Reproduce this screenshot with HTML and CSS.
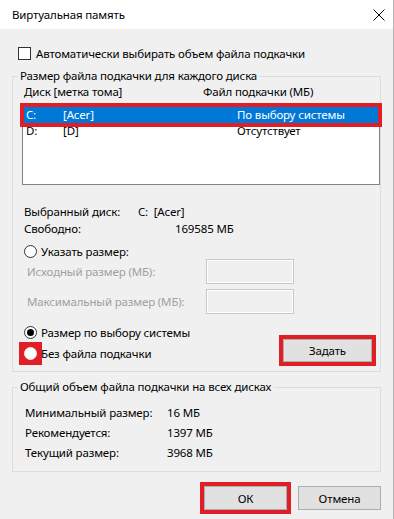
FILE: index.html
```html
<!DOCTYPE html>
<html lang="ru">
<head>
  <meta charset="UTF-8">
  <meta name="viewport" content="width=device-width, initial-scale=1.0">
  <title>Виртуальная память</title>
  <link rel="stylesheet" href="styles.css">
</head>
<body>

<div class="window">
  <div class="titlebar">
    <span class="title">Виртуальная память</span>
    <svg class="close" width="12" height="12" viewBox="0 0 12 12">
      <path d="M0.5 0.5L11.5 11.5M11.5 0.5L0.5 11.5" stroke="#000" stroke-width="1" fill="none"/>
    </svg>
  </div>

  <div class="content">
    <div class="check-row">
      <span class="checkbox"></span>
      <span>Автоматически выбирать объем файла подкачки</span>
    </div>

    <fieldset class="group">
      <legend>Размер файла подкачки для каждого диска</legend>
      <div class="group-body drives">
        <div class="list-head">
          <span class="col-disk">Диск [метка тома]</span>
          <span>Файл подкачки (МБ)</span>
        </div>
        <div class="drive-list">
          <div class="drive-row selected">
            <span class="c-letter">C:</span><span class="c-label">[Acer]</span><span>По выбору системы</span>
          </div>
          <div class="drive-row">
            <span class="c-letter">D:</span><span class="c-label">[D]</span><span>Отсутствует</span>
          </div>
        </div>

        <div class="disk-info">
          <div class="info-row"><span class="info-label">Выбранный диск:</span><span>C:&nbsp; [Acer]</span></div>
          <div class="info-row"><span class="info-label free">Свободно:</span><span>169585 МБ</span></div>
        </div>

        <div class="radio-row custom">
          <span class="radio"></span>
          <span>Указать размер:</span>
        </div>
        <div class="size-row">
          <span class="size-label">Исходный размер (МБ):</span>
          <span class="size-input"></span>
        </div>
        <div class="size-row">
          <span class="size-label">Максимальный размер (МБ):</span>
          <span class="size-input"></span>
        </div>

        <div class="choice">
          <div class="choice-radios">
            <div class="radio-row">
              <span class="radio checked"></span>
              <span>Размер по выбору системы</span>
            </div>
            <div class="radio-row">
              <span class="radio-mark"><span class="radio"></span></span>
              <span>Без файла подкачки</span>
            </div>
          </div>
          <button class="btn btn-set marked">Задать</button>
        </div>
      </div>
    </fieldset>

    <fieldset class="group total">
      <legend>Общий объем файла подкачки на всех дисках</legend>
      <div class="group-body totals">
        <div class="total-row"><span class="total-label">Минимальный размер:</span><span>16 МБ</span></div>
        <div class="total-row"><span class="total-label">Рекомендуется:</span><span>1397 МБ</span></div>
        <div class="total-row"><span class="total-label">Текущий размер:</span><span>3968 МБ</span></div>
      </div>
    </fieldset>

    <div class="buttons">
      <button class="btn marked">ОК</button>
      <button class="btn">Отмена</button>
    </div>
  </div>
</div>

</body>
</html>
```

FILE: styles.css
```css
body {
  margin: 0;
  background: #f0f0f0;
  font-family: "Noto Sans", "Open Sans", sans-serif;
  font-size: 11.5px;
  letter-spacing: -0.15px;
  color: #000;
}

.window {
  width: 394px;
  height: 519px;
  box-sizing: border-box;
  border-right: 1px solid #b4b4b4;
  overflow: hidden;
}

.titlebar {
  height: 29px;
  background: #fff;
  display: flex;
  align-items: center;
  justify-content: space-between;
  padding: 0 8px 0 12px;
}

.content {
  padding: 0 12px;
}

.check-row {
  display: flex;
  align-items: center;
  gap: 5px;
  height: 16px;
  margin-top: 16px;
  padding-left: 6px;
}

.checkbox {
  width: 13px;
  height: 13px;
  box-sizing: border-box;
  border: 1px solid #333;
  background: #fff;
}

.group {
  margin: 7px 0 0;
  padding: 0;
  min-width: 0;
  border: 1px solid #dcdcdc;
}

.group legend {
  margin-left: 5px;
  padding: 0 2px;
  line-height: 16px;
}

.drives {
  padding: 0 0 8px 9px;
}

.list-head {
  display: flex;
  height: 15px;
  line-height: 15px;
  padding-left: 2px;
}

.col-disk {
  width: 179px;
}

.drive-list {
  height: 82px;
  box-sizing: border-box;
  margin-top: 4px;
  padding: 3px 1px 0;
  border: 1px solid #828282;
  background: #fff;
}

.drive-row {
  display: flex;
  height: 16px;
  line-height: 16px;
  padding-left: 2px;
}

.drive-row.selected {
  background: #0078d7;
  color: #fff;
  outline: 4px solid #e01e26;
}

.c-letter {
  width: 37px;
}

.c-label {
  width: 174px;
}

.disk-info {
  margin-top: 18px;
}

.info-row {
  display: flex;
  height: 17px;
  line-height: 17px;
  padding-left: 2px;
}

.info-label {
  width: 114px;
}

.info-label.free {
  width: 151px;
}

.radio-row {
  display: flex;
  align-items: center;
  gap: 4px;
  height: 20px;
  padding-left: 2px;
}

.radio-row.custom {
  height: 15px;
  margin-top: 7px;
}

.radio {
  position: relative;
  display: block;
  width: 13px;
  height: 13px;
  box-sizing: border-box;
  border: 1px solid #333;
  border-radius: 50%;
  background: #fff;
}

.radio.checked::after {
  content: "";
  position: absolute;
  left: 2px;
  top: 2px;
  width: 7px;
  height: 7px;
  border-radius: 50%;
  background: #000;
}

.radio-mark {
  display: block;
  background: #e01e26;
  outline: 5px solid #e01e26;
}

.radio-mark .radio {
  border-color: #f4f4f4;
}

.size-row {
  display: flex;
  align-items: center;
  height: 25px;
  padding-left: 5px;
  color: #a0a0a0;
}

.size-row + .size-row {
  margin-top: 5px;
}

.size-label {
  width: 179px;
}

.size-input {
  width: 88px;
  height: 25px;
  box-sizing: border-box;
  border: 1px solid #c8c8c8;
  box-shadow: inset 0 0 0 1px #fff;
  background: #f0f0f0;
}

.choice {
  display: flex;
  justify-content: space-between;
  margin-top: 8px;
}

.choice-radios {
  display: flex;
  flex-direction: column;
  gap: 1px;
}

.btn {
  width: 83px;
  height: 24px;
  padding: 0;
  border: 1px solid #adadad;
  background: #e1e1e1;
  font: inherit;
  letter-spacing: inherit;
  color: #000;
}

.btn-set {
  width: 89px;
  height: 23px;
  align-self: flex-end;
  margin: 0 8px 1px 0;
}

.btn.marked {
  outline: 4px solid #e01e26;
}

.total {
  margin-top: 7px;
}

.totals {
  padding: 8px 0 8px 12px;
}

.total-row {
  display: flex;
  height: 20px;
  line-height: 20px;
}

.total-label {
  width: 142px;
}

.buttons {
  display: flex;
  justify-content: flex-end;
  gap: 11px;
  margin-top: 14px;
}
```
